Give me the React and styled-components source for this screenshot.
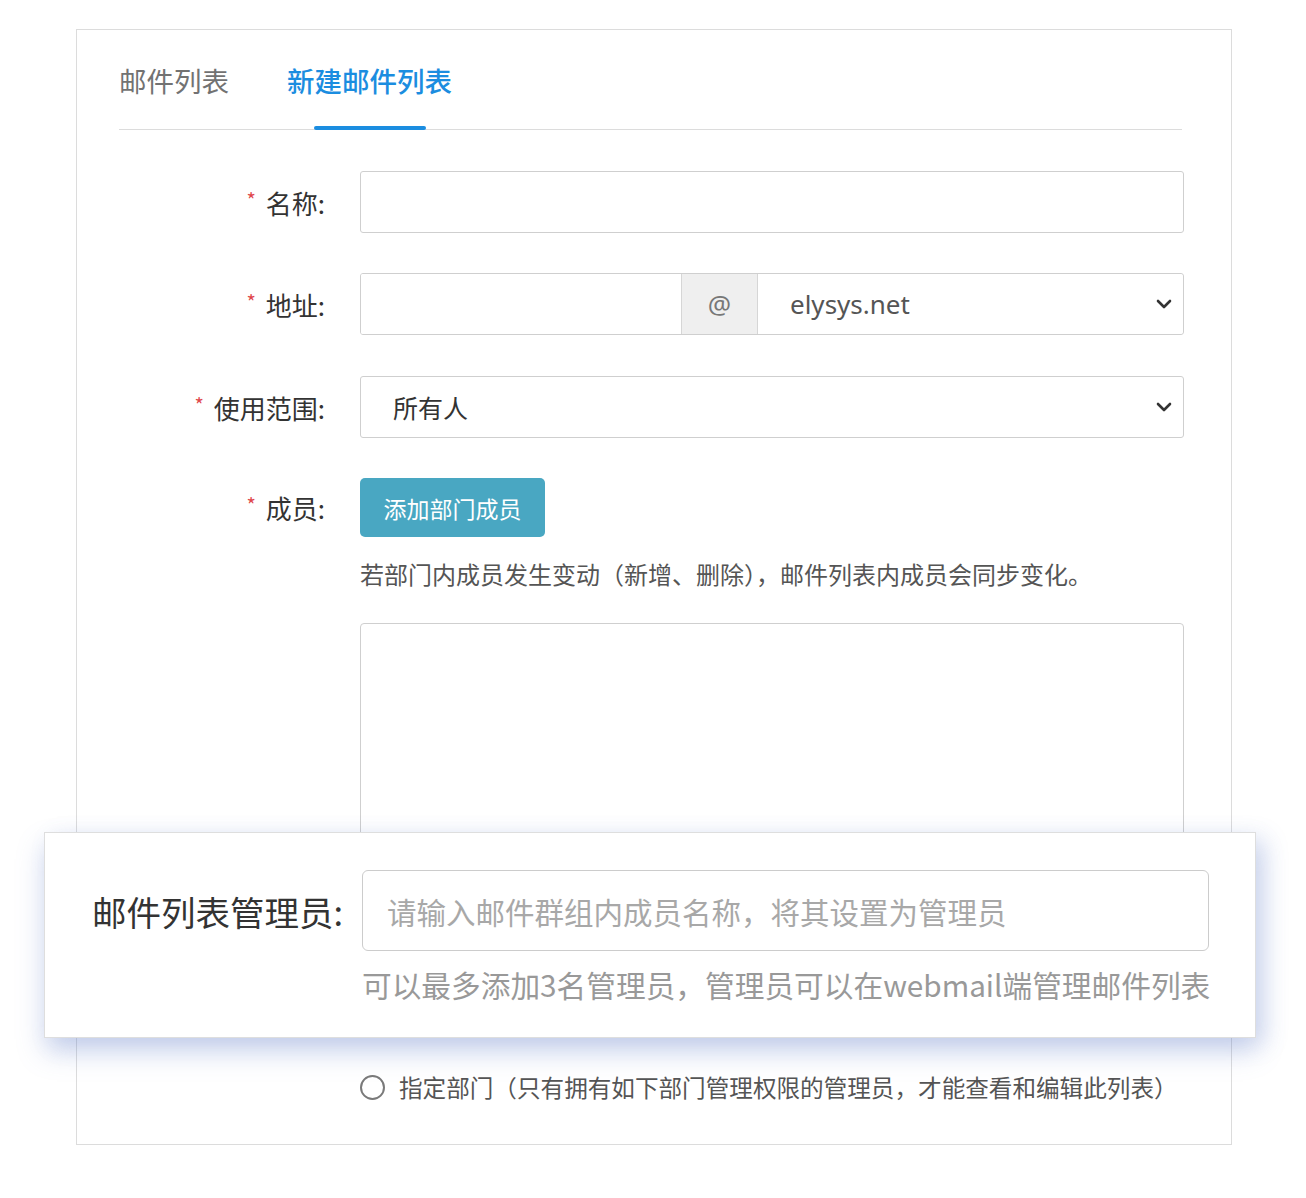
import React from 'react';
import styled, { createGlobalStyle } from 'styled-components';

const GlobalStyle = createGlobalStyle`
  html, body {
    margin: 0;
    padding: 0;
    background: #ffffff;
  }
  body {
    font-family: "Noto Sans CJK SC", "Noto Sans", sans-serif;
    color: #333;
  }
  * {
    box-sizing: border-box;
  }
`;

const Page = styled.div`
  position: relative;
  width: 1306px;
  height: 1198px;
  padding: 29px 0 0 76px;
`;

const Card = styled.div`
  width: 1156px;
  height: 1116px;
  border: 1px solid #dcdcdc;
  padding-top: 31px;
`;

const TabBar = styled.div`
  display: flex;
  gap: 58px;
  margin: 0 49px 0 42px;
  border-bottom: 1px solid #dcdcdc;
`;

const Tab = styled.div`
  position: relative;
  font-size: 27.5px;
  line-height: 39px;
  padding-bottom: 29px;
  color: ${({ $active }) => ($active ? '#1b8de0' : '#727272')};
  font-weight: ${({ $active }) => ($active ? 500 : 400)};

  &::after {
    content: '';
    display: ${({ $active }) => ($active ? 'block' : 'none')};
    position: absolute;
    left: 50%;
    bottom: -1px;
    width: 112px;
    height: 4px;
    margin-left: -56px;
    background: #1b8de0;
    border-radius: 2px;
  }
`;

const Form = styled.div`
  display: flex;
  flex-direction: column;
  padding-top: 41px;
`;

const Field = styled.div`
  display: grid;
  grid-template-columns: 248px 824px;
  column-gap: 35px;
  align-items: center;
  margin-bottom: ${({ $mb }) => $mb}px;
`;

const Label = styled.div`
  display: flex;
  justify-content: flex-end;
  align-items: center;
  font-size: 26px;
  color: #333;
  white-space: nowrap;
`;

const Star = styled.span`
  color: #e0474c;
  font-size: 20px;
  margin-right: 10px;
  position: relative;
  top: -3px;
`;

const TextInput = styled.div`
  height: 62px;
  border: 1px solid #cfcfcf;
  border-radius: 3px;
  background: #fff;
`;

const InputGroup = styled.div`
  display: flex;
  height: 62px;
  border: 1px solid #cfcfcf;
  border-radius: 3px;
  overflow: hidden;
`;

const GroupInput = styled.div`
  width: 320px;
  background: #fff;
`;

const Addon = styled.div`
  width: 77px;
  display: flex;
  align-items: center;
  justify-content: center;
  background: #efefef;
  border-left: 1px solid #d6d6d6;
  border-right: 1px solid #d6d6d6;
  color: #777;
  font-family: "Noto Sans", sans-serif;
  font-size: 26px;
`;

const Select = styled.div`
  flex: ${({ $grow }) => ($grow ? 1 : 'none')};
  height: ${({ $grow }) => ($grow ? '100%' : '62px')};
  display: flex;
  align-items: center;
  justify-content: space-between;
  padding: 0 10px 0 32px;
  background: #fff;
  border: ${({ $grow }) => ($grow ? 'none' : '1px solid #cfcfcf')};
  border-radius: 3px;
  font-size: ${({ $latin }) => ($latin ? '26px' : '25px')};
  font-family: ${({ $latin }) =>
    $latin ? '"Noto Sans", sans-serif' : '"Noto Sans CJK SC", sans-serif'};
  color: ${({ $latin }) => ($latin ? '#555' : '#333')};
`;

const Chevron = () => (
  <svg width="18" height="12" viewBox="0 0 18 12">
    <path d="M3 3l6 6 6-6" fill="none" stroke="#333" strokeWidth="2.6" strokeLinecap="round" strokeLinejoin="round" />
  </svg>
);

const Button = styled.div`
  width: 185px;
  height: 59px;
  display: flex;
  align-items: center;
  justify-content: center;
  background: #49a7c2;
  color: #fff;
  border-radius: 5px;
  font-size: 23px;
`;

const Help = styled.div`
  grid-column: 2;
  font-size: 24px;
  line-height: 36px;
  color: #555;
  white-space: nowrap;
`;

const TextArea = styled.div`
  grid-column: 2;
  height: 320px;
  border: 1px solid #cfcfcf;
  border-radius: 4px;
  background: #fff;
`;

const Radio = styled.div`
  grid-column: 2;
  display: flex;
  align-items: center;
  gap: 14px;
  font-size: 23.6px;
  line-height: 36px;
  color: #555;
  white-space: nowrap;
`;

const RadioDot = styled.span`
  width: 25px;
  height: 25px;
  border: 2px solid #7a7a7a;
  border-radius: 50%;
  flex: none;
`;

const Callout = styled.div`
  position: absolute;
  left: 44px;
  top: 832px;
  width: 1212px;
  height: 206px;
  background: #fff;
  border: 1px solid #dedede;
  box-shadow: 0 14px 26px rgba(96, 124, 200, 0.28), 10px 6px 22px rgba(96, 124, 200, 0.18);
  padding: 37px 0 0 47px;
  display: grid;
  grid-template-columns: 254px 847px;
  column-gap: 16px;
  align-content: start;
`;

const CalloutLabel = styled.div`
  font-size: 34.5px;
  color: #333;
  align-self: center;
  white-space: nowrap;
`;

const CalloutInput = styled.div`
  height: 81px;
  border: 1px solid #cccccc;
  border-radius: 6px;
  display: flex;
  align-items: center;
  padding-left: 24px;
  font-size: 29.5px;
  color: #a8a8a8;
  white-space: nowrap;
`;

const CalloutHelp = styled.div`
  grid-column: 2;
  margin-top: 13px;
  font-size: 29.7px;
  line-height: 42px;
  color: #999;
  white-space: nowrap;
`;

const App = () => (
  <Page>
    <GlobalStyle />
    <Card>
      <TabBar>
        <Tab>邮件列表</Tab>
        <Tab $active>新建邮件列表</Tab>
      </TabBar>

      <Form>
        <Field $mb={40}>
          <Label><Star>*</Star>名称:</Label>
          <TextInput />
        </Field>

        <Field $mb={41}>
          <Label><Star>*</Star>地址:</Label>
          <InputGroup>
            <GroupInput />
            <Addon>@</Addon>
            <Select $grow $latin>
              elysys.net
              <Chevron />
            </Select>
          </InputGroup>
        </Field>

        <Field $mb={40}>
          <Label><Star>*</Star>使用范围:</Label>
          <Select>
            所有人
            <Chevron />
          </Select>
        </Field>

        <Field $mb={19}>
          <Label><Star>*</Star>成员:</Label>
          <Button>添加部门成员</Button>
        </Field>

        <Field $mb={31}>
          <Help>若部门内成员发生变动（新增、删除），邮件列表内成员会同步变化。</Help>
        </Field>

        <Field $mb={126}>
          <TextArea />
        </Field>

        <Field $mb={0}>
          <Radio><RadioDot />指定部门（只有拥有如下部门管理权限的管理员，才能查看和编辑此列表）</Radio>
        </Field>
      </Form>
    </Card>

    <Callout>
      <CalloutLabel>邮件列表管理员:</CalloutLabel>
      <CalloutInput>请输入邮件群组内成员名称，将其设置为管理员</CalloutInput>
      <CalloutHelp>可以最多添加3名管理员，管理员可以在webmail端管理邮件列表</CalloutHelp>
    </Callout>
  </Page>
);

export default App;
